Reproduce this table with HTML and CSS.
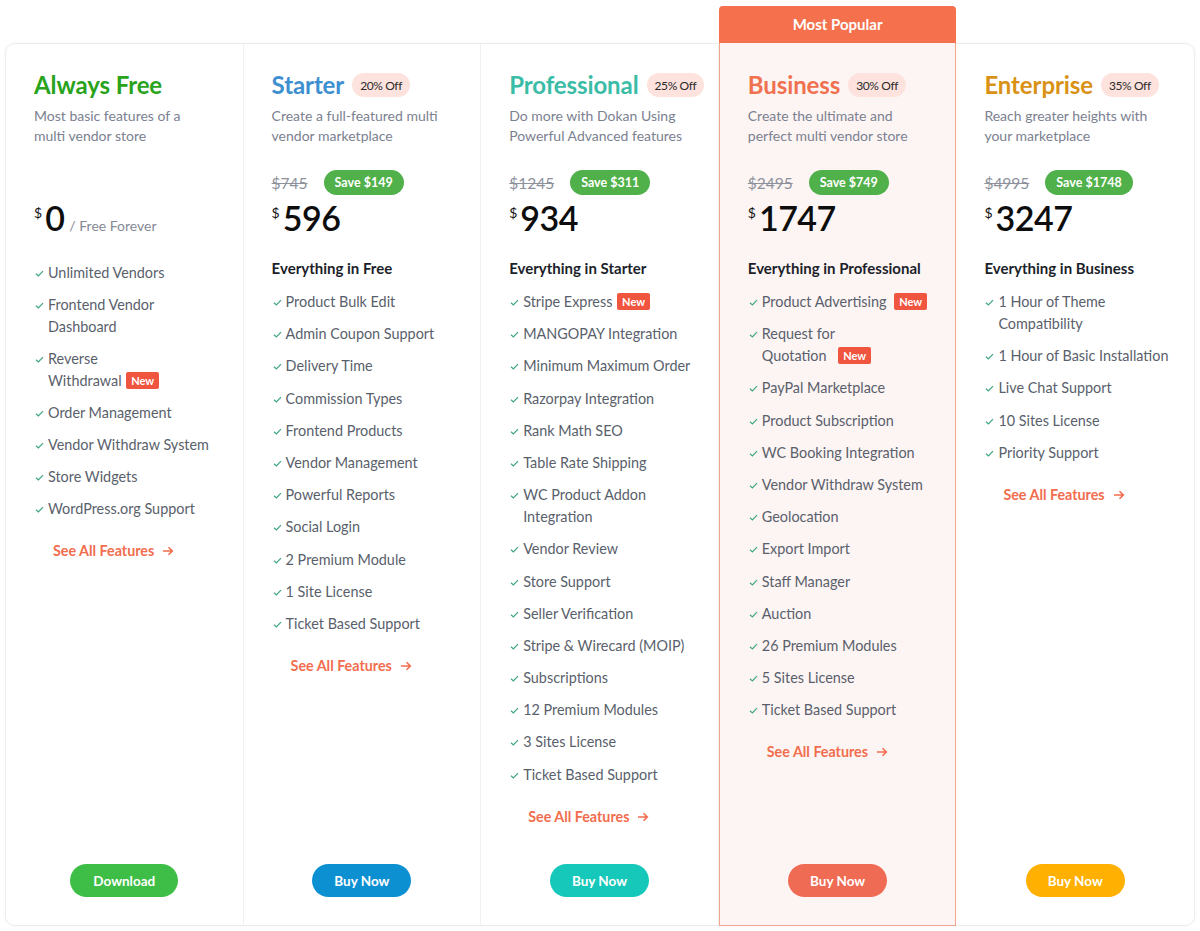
FILE: index.html
```html
<!DOCTYPE html>
<html lang="en">
<head>
<meta charset="utf-8">
<title>Pricing</title>
<link rel="stylesheet" href="styles.css">
</head>
<body>
<main class="pricing">
  <div class="plans">

    <section class="plan">
      <div class="plan-body">
        <div class="plan-head"><h2 class="plan-title title-free">Always Free</h2></div>
        <p class="plan-desc">Most basic features of a<br>multi vendor store</p>
        <div class="old-row old-row--empty"></div>
        <div class="price"><span class="cur">$</span><span class="amount">0</span><span class="period">/ Free Forever</span></div>
        <ul class="features features--first">
          <li><span class="chk"><svg viewBox="0 0 10 8" width="9" height="7"><path d="M1 4.3 3.7 6.8 9 1.2" fill="none" stroke="#3fa585" stroke-width="1.4"/></svg></span><span>Unlimited Vendors</span></li>
          <li><span class="chk"><svg viewBox="0 0 10 8" width="9" height="7"><path d="M1 4.3 3.7 6.8 9 1.2" fill="none" stroke="#3fa585" stroke-width="1.4"/></svg></span><span>Frontend Vendor<br>Dashboard</span></li>
          <li><span class="chk"><svg viewBox="0 0 10 8" width="9" height="7"><path d="M1 4.3 3.7 6.8 9 1.2" fill="none" stroke="#3fa585" stroke-width="1.4"/></svg></span><span>Reverse<br>Withdrawal <em class="new">New</em></span></li>
          <li><span class="chk"><svg viewBox="0 0 10 8" width="9" height="7"><path d="M1 4.3 3.7 6.8 9 1.2" fill="none" stroke="#3fa585" stroke-width="1.4"/></svg></span><span>Order Management</span></li>
          <li><span class="chk"><svg viewBox="0 0 10 8" width="9" height="7"><path d="M1 4.3 3.7 6.8 9 1.2" fill="none" stroke="#3fa585" stroke-width="1.4"/></svg></span><span>Vendor Withdraw System</span></li>
          <li><span class="chk"><svg viewBox="0 0 10 8" width="9" height="7"><path d="M1 4.3 3.7 6.8 9 1.2" fill="none" stroke="#3fa585" stroke-width="1.4"/></svg></span><span>Store Widgets</span></li>
          <li><span class="chk"><svg viewBox="0 0 10 8" width="9" height="7"><path d="M1 4.3 3.7 6.8 9 1.2" fill="none" stroke="#3fa585" stroke-width="1.4"/></svg></span><span>WordPress.org Support</span></li>
        </ul>
        <a class="see-all" href="#">See All Features <svg viewBox="0 0 12 10" width="12" height="10"><path d="M1 5h9.5M6.5 1.3 10.3 5 6.5 8.7" fill="none" stroke="currentColor" stroke-width="1.6"/></svg></a>
        <div class="cta"><a class="btn btn-green" href="#">Download</a></div>
      </div>
    </section>

    <section class="plan">
      <div class="plan-body">
        <div class="plan-head"><h2 class="plan-title title-starter">Starter</h2><span class="off">20% Off</span></div>
        <p class="plan-desc">Create a full-featured multi<br>vendor marketplace</p>
        <div class="old-row"><s class="old">$745</s><span class="save">Save $149</span></div>
        <div class="price"><span class="cur">$</span><span class="amount">596</span></div>
        <h3 class="includes">Everything in Free</h3>
        <ul class="features">
          <li><span class="chk"><svg viewBox="0 0 10 8" width="9" height="7"><path d="M1 4.3 3.7 6.8 9 1.2" fill="none" stroke="#3fa585" stroke-width="1.4"/></svg></span><span>Product Bulk Edit</span></li>
          <li><span class="chk"><svg viewBox="0 0 10 8" width="9" height="7"><path d="M1 4.3 3.7 6.8 9 1.2" fill="none" stroke="#3fa585" stroke-width="1.4"/></svg></span><span>Admin Coupon Support</span></li>
          <li><span class="chk"><svg viewBox="0 0 10 8" width="9" height="7"><path d="M1 4.3 3.7 6.8 9 1.2" fill="none" stroke="#3fa585" stroke-width="1.4"/></svg></span><span>Delivery Time</span></li>
          <li><span class="chk"><svg viewBox="0 0 10 8" width="9" height="7"><path d="M1 4.3 3.7 6.8 9 1.2" fill="none" stroke="#3fa585" stroke-width="1.4"/></svg></span><span>Commission Types</span></li>
          <li><span class="chk"><svg viewBox="0 0 10 8" width="9" height="7"><path d="M1 4.3 3.7 6.8 9 1.2" fill="none" stroke="#3fa585" stroke-width="1.4"/></svg></span><span>Frontend Products</span></li>
          <li><span class="chk"><svg viewBox="0 0 10 8" width="9" height="7"><path d="M1 4.3 3.7 6.8 9 1.2" fill="none" stroke="#3fa585" stroke-width="1.4"/></svg></span><span>Vendor Management</span></li>
          <li><span class="chk"><svg viewBox="0 0 10 8" width="9" height="7"><path d="M1 4.3 3.7 6.8 9 1.2" fill="none" stroke="#3fa585" stroke-width="1.4"/></svg></span><span>Powerful Reports</span></li>
          <li><span class="chk"><svg viewBox="0 0 10 8" width="9" height="7"><path d="M1 4.3 3.7 6.8 9 1.2" fill="none" stroke="#3fa585" stroke-width="1.4"/></svg></span><span>Social Login</span></li>
          <li><span class="chk"><svg viewBox="0 0 10 8" width="9" height="7"><path d="M1 4.3 3.7 6.8 9 1.2" fill="none" stroke="#3fa585" stroke-width="1.4"/></svg></span><span>2 Premium Module</span></li>
          <li><span class="chk"><svg viewBox="0 0 10 8" width="9" height="7"><path d="M1 4.3 3.7 6.8 9 1.2" fill="none" stroke="#3fa585" stroke-width="1.4"/></svg></span><span>1 Site License</span></li>
          <li><span class="chk"><svg viewBox="0 0 10 8" width="9" height="7"><path d="M1 4.3 3.7 6.8 9 1.2" fill="none" stroke="#3fa585" stroke-width="1.4"/></svg></span><span>Ticket Based Support</span></li>
        </ul>
        <a class="see-all" href="#">See All Features <svg viewBox="0 0 12 10" width="12" height="10"><path d="M1 5h9.5M6.5 1.3 10.3 5 6.5 8.7" fill="none" stroke="currentColor" stroke-width="1.6"/></svg></a>
        <div class="cta"><a class="btn btn-blue" href="#">Buy Now</a></div>
      </div>
    </section>

    <section class="plan">
      <div class="plan-body">
        <div class="plan-head"><h2 class="plan-title title-pro">Professional</h2><span class="off">25% Off</span></div>
        <p class="plan-desc">Do more with Dokan Using<br>Powerful Advanced features</p>
        <div class="old-row"><s class="old">$1245</s><span class="save">Save $311</span></div>
        <div class="price"><span class="cur">$</span><span class="amount">934</span></div>
        <h3 class="includes">Everything in Starter</h3>
        <ul class="features">
          <li><span class="chk"><svg viewBox="0 0 10 8" width="9" height="7"><path d="M1 4.3 3.7 6.8 9 1.2" fill="none" stroke="#3fa585" stroke-width="1.4"/></svg></span><span>Stripe Express <em class="new">New</em></span></li>
          <li><span class="chk"><svg viewBox="0 0 10 8" width="9" height="7"><path d="M1 4.3 3.7 6.8 9 1.2" fill="none" stroke="#3fa585" stroke-width="1.4"/></svg></span><span>MANGOPAY Integration</span></li>
          <li><span class="chk"><svg viewBox="0 0 10 8" width="9" height="7"><path d="M1 4.3 3.7 6.8 9 1.2" fill="none" stroke="#3fa585" stroke-width="1.4"/></svg></span><span>Minimum Maximum Order</span></li>
          <li><span class="chk"><svg viewBox="0 0 10 8" width="9" height="7"><path d="M1 4.3 3.7 6.8 9 1.2" fill="none" stroke="#3fa585" stroke-width="1.4"/></svg></span><span>Razorpay Integration</span></li>
          <li><span class="chk"><svg viewBox="0 0 10 8" width="9" height="7"><path d="M1 4.3 3.7 6.8 9 1.2" fill="none" stroke="#3fa585" stroke-width="1.4"/></svg></span><span>Rank Math SEO</span></li>
          <li><span class="chk"><svg viewBox="0 0 10 8" width="9" height="7"><path d="M1 4.3 3.7 6.8 9 1.2" fill="none" stroke="#3fa585" stroke-width="1.4"/></svg></span><span>Table Rate Shipping</span></li>
          <li><span class="chk"><svg viewBox="0 0 10 8" width="9" height="7"><path d="M1 4.3 3.7 6.8 9 1.2" fill="none" stroke="#3fa585" stroke-width="1.4"/></svg></span><span>WC Product Addon<br>Integration</span></li>
          <li><span class="chk"><svg viewBox="0 0 10 8" width="9" height="7"><path d="M1 4.3 3.7 6.8 9 1.2" fill="none" stroke="#3fa585" stroke-width="1.4"/></svg></span><span>Vendor Review</span></li>
          <li><span class="chk"><svg viewBox="0 0 10 8" width="9" height="7"><path d="M1 4.3 3.7 6.8 9 1.2" fill="none" stroke="#3fa585" stroke-width="1.4"/></svg></span><span>Store Support</span></li>
          <li><span class="chk"><svg viewBox="0 0 10 8" width="9" height="7"><path d="M1 4.3 3.7 6.8 9 1.2" fill="none" stroke="#3fa585" stroke-width="1.4"/></svg></span><span>Seller Verification</span></li>
          <li><span class="chk"><svg viewBox="0 0 10 8" width="9" height="7"><path d="M1 4.3 3.7 6.8 9 1.2" fill="none" stroke="#3fa585" stroke-width="1.4"/></svg></span><span>Stripe &amp; Wirecard (MOIP)</span></li>
          <li><span class="chk"><svg viewBox="0 0 10 8" width="9" height="7"><path d="M1 4.3 3.7 6.8 9 1.2" fill="none" stroke="#3fa585" stroke-width="1.4"/></svg></span><span>Subscriptions</span></li>
          <li><span class="chk"><svg viewBox="0 0 10 8" width="9" height="7"><path d="M1 4.3 3.7 6.8 9 1.2" fill="none" stroke="#3fa585" stroke-width="1.4"/></svg></span><span>12 Premium Modules</span></li>
          <li><span class="chk"><svg viewBox="0 0 10 8" width="9" height="7"><path d="M1 4.3 3.7 6.8 9 1.2" fill="none" stroke="#3fa585" stroke-width="1.4"/></svg></span><span>3 Sites License</span></li>
          <li><span class="chk"><svg viewBox="0 0 10 8" width="9" height="7"><path d="M1 4.3 3.7 6.8 9 1.2" fill="none" stroke="#3fa585" stroke-width="1.4"/></svg></span><span>Ticket Based Support</span></li>
        </ul>
        <a class="see-all" href="#">See All Features <svg viewBox="0 0 12 10" width="12" height="10"><path d="M1 5h9.5M6.5 1.3 10.3 5 6.5 8.7" fill="none" stroke="currentColor" stroke-width="1.6"/></svg></a>
        <div class="cta"><a class="btn btn-teal" href="#">Buy Now</a></div>
      </div>
    </section>

    <section class="plan plan--popular">
      <div class="popular-tag">Most Popular</div>
      <div class="plan-body">
        <div class="plan-head"><h2 class="plan-title title-business">Business</h2><span class="off">30% Off</span></div>
        <p class="plan-desc">Create the ultimate and<br>perfect multi vendor store</p>
        <div class="old-row"><s class="old">$2495</s><span class="save">Save $749</span></div>
        <div class="price"><span class="cur">$</span><span class="amount">1747</span></div>
        <h3 class="includes">Everything in Professional</h3>
        <ul class="features">
          <li><span class="chk"><svg viewBox="0 0 10 8" width="9" height="7"><path d="M1 4.3 3.7 6.8 9 1.2" fill="none" stroke="#3fa585" stroke-width="1.4"/></svg></span><span>Product Advertising <em class="new new--wide">New</em></span></li>
          <li><span class="chk"><svg viewBox="0 0 10 8" width="9" height="7"><path d="M1 4.3 3.7 6.8 9 1.2" fill="none" stroke="#3fa585" stroke-width="1.4"/></svg></span><span>Request for<br>Quotation <em class="new new--wider">New</em></span></li>
          <li><span class="chk"><svg viewBox="0 0 10 8" width="9" height="7"><path d="M1 4.3 3.7 6.8 9 1.2" fill="none" stroke="#3fa585" stroke-width="1.4"/></svg></span><span>PayPal Marketplace</span></li>
          <li><span class="chk"><svg viewBox="0 0 10 8" width="9" height="7"><path d="M1 4.3 3.7 6.8 9 1.2" fill="none" stroke="#3fa585" stroke-width="1.4"/></svg></span><span>Product Subscription</span></li>
          <li><span class="chk"><svg viewBox="0 0 10 8" width="9" height="7"><path d="M1 4.3 3.7 6.8 9 1.2" fill="none" stroke="#3fa585" stroke-width="1.4"/></svg></span><span>WC Booking Integration</span></li>
          <li><span class="chk"><svg viewBox="0 0 10 8" width="9" height="7"><path d="M1 4.3 3.7 6.8 9 1.2" fill="none" stroke="#3fa585" stroke-width="1.4"/></svg></span><span>Vendor Withdraw System</span></li>
          <li><span class="chk"><svg viewBox="0 0 10 8" width="9" height="7"><path d="M1 4.3 3.7 6.8 9 1.2" fill="none" stroke="#3fa585" stroke-width="1.4"/></svg></span><span>Geolocation</span></li>
          <li><span class="chk"><svg viewBox="0 0 10 8" width="9" height="7"><path d="M1 4.3 3.7 6.8 9 1.2" fill="none" stroke="#3fa585" stroke-width="1.4"/></svg></span><span>Export Import</span></li>
          <li><span class="chk"><svg viewBox="0 0 10 8" width="9" height="7"><path d="M1 4.3 3.7 6.8 9 1.2" fill="none" stroke="#3fa585" stroke-width="1.4"/></svg></span><span>Staff Manager</span></li>
          <li><span class="chk"><svg viewBox="0 0 10 8" width="9" height="7"><path d="M1 4.3 3.7 6.8 9 1.2" fill="none" stroke="#3fa585" stroke-width="1.4"/></svg></span><span>Auction</span></li>
          <li><span class="chk"><svg viewBox="0 0 10 8" width="9" height="7"><path d="M1 4.3 3.7 6.8 9 1.2" fill="none" stroke="#3fa585" stroke-width="1.4"/></svg></span><span>26 Premium Modules</span></li>
          <li><span class="chk"><svg viewBox="0 0 10 8" width="9" height="7"><path d="M1 4.3 3.7 6.8 9 1.2" fill="none" stroke="#3fa585" stroke-width="1.4"/></svg></span><span>5 Sites License</span></li>
          <li><span class="chk"><svg viewBox="0 0 10 8" width="9" height="7"><path d="M1 4.3 3.7 6.8 9 1.2" fill="none" stroke="#3fa585" stroke-width="1.4"/></svg></span><span>Ticket Based Support</span></li>
        </ul>
        <a class="see-all" href="#">See All Features <svg viewBox="0 0 12 10" width="12" height="10"><path d="M1 5h9.5M6.5 1.3 10.3 5 6.5 8.7" fill="none" stroke="currentColor" stroke-width="1.6"/></svg></a>
        <div class="cta"><a class="btn btn-orange" href="#">Buy Now</a></div>
      </div>
    </section>

    <section class="plan">
      <div class="plan-body">
        <div class="plan-head"><h2 class="plan-title title-enterprise">Enterprise</h2><span class="off">35% Off</span></div>
        <p class="plan-desc">Reach greater heights with<br>your marketplace</p>
        <div class="old-row"><s class="old">$4995</s><span class="save">Save $1748</span></div>
        <div class="price"><span class="cur">$</span><span class="amount">3247</span></div>
        <h3 class="includes">Everything in Business</h3>
        <ul class="features">
          <li><span class="chk"><svg viewBox="0 0 10 8" width="9" height="7"><path d="M1 4.3 3.7 6.8 9 1.2" fill="none" stroke="#3fa585" stroke-width="1.4"/></svg></span><span>1 Hour of Theme<br>Compatibility</span></li>
          <li><span class="chk"><svg viewBox="0 0 10 8" width="9" height="7"><path d="M1 4.3 3.7 6.8 9 1.2" fill="none" stroke="#3fa585" stroke-width="1.4"/></svg></span><span>1 Hour of Basic Installation</span></li>
          <li><span class="chk"><svg viewBox="0 0 10 8" width="9" height="7"><path d="M1 4.3 3.7 6.8 9 1.2" fill="none" stroke="#3fa585" stroke-width="1.4"/></svg></span><span>Live Chat Support</span></li>
          <li><span class="chk"><svg viewBox="0 0 10 8" width="9" height="7"><path d="M1 4.3 3.7 6.8 9 1.2" fill="none" stroke="#3fa585" stroke-width="1.4"/></svg></span><span>10 Sites License</span></li>
          <li><span class="chk"><svg viewBox="0 0 10 8" width="9" height="7"><path d="M1 4.3 3.7 6.8 9 1.2" fill="none" stroke="#3fa585" stroke-width="1.4"/></svg></span><span>Priority Support</span></li>
        </ul>
        <a class="see-all" href="#">See All Features <svg viewBox="0 0 12 10" width="12" height="10"><path d="M1 5h9.5M6.5 1.3 10.3 5 6.5 8.7" fill="none" stroke="currentColor" stroke-width="1.6"/></svg></a>
        <div class="cta"><a class="btn btn-yellow" href="#">Buy Now</a></div>
      </div>
    </section>

  </div>
</main>
</body>
</html>
```

FILE: styles.css
```css
* { box-sizing: border-box; }

html, body {
  margin: 0;
  padding: 0;
  background: #ffffff;
}

body {
  font-family: Lato, "Liberation Sans", Arial, sans-serif;
  color: #1f2330;
  -webkit-font-smoothing: antialiased;
}

.pricing {
  padding: 43px 5px 5px;
}

.plans {
  display: grid;
  grid-template-columns: repeat(5, minmax(0, 1fr));
  grid-template-rows: 881px;
  height: 883px;
  border: 1px solid #ebebeb;
  border-radius: 10px;
  box-shadow: 0 0 6px rgba(0, 0, 0, 0.03);
}

.plan {
  display: flex;
  flex-direction: column;
  border-right: 1px solid #f0f0f0;
  min-width: 0;
}

.plan:last-child { border-right: 0; }

.plan-body {
  flex: 1;
  display: flex;
  flex-direction: column;
  padding: 26px 20px 28px 28px;
}

/* Most popular column */
.plan--popular {
  margin-top: -38px;
  margin-bottom: -1px;
  border-right: 0;
}

.popular-tag {
  height: 37px;
  background: #f5714d;
  color: #ffffff;
  font-weight: 700;
  font-size: 15px;
  line-height: 37px;
  text-align: center;
  border-radius: 4px 4px 0 0;
}

.plan--popular .plan-body {
  background: #fdf5f4;
  border: 1px solid #f3a58f;
  border-top: 0;
  padding-top: 27px;
  padding-left: 28px;
}

/* header */
.plan-head {
  display: flex;
  align-items: center;
  gap: 8px;
  height: 30px;
  white-space: nowrap;
}

.plan-title {
  margin: 0;
  font-size: 24px;
  line-height: 30px;
  font-weight: 700;
  letter-spacing: -0.1px;
}

.title-free { color: #2aa31c; }
.title-starter { color: #3d8fcf; }
.title-pro { color: #3bbca6; }
.title-business { color: #f0714f; }
.title-enterprise { color: #d99215; }

.off {
  display: inline-flex;
  align-items: center;
  height: 24px;
  padding: 0 8px;
  border-radius: 12px;
  background: #fde2dd;
  color: #2a2a2a;
  font-size: 12px;
  letter-spacing: -0.4px;
  white-space: nowrap;
}

.plan-desc {
  margin: 6px 0 0;
  font-size: 14px;
  line-height: 19.5px;
  color: #7b8190;
  white-space: nowrap;
}

/* prices */
.old-row {
  display: flex;
  align-items: center;
  height: 25px;
  margin-top: 25px;
  gap: 16px;
  white-space: nowrap;
}

.old {
  font-size: 15.5px;
  color: #8d919b;
  text-decoration: line-through;
}

.save {
  display: inline-flex;
  align-items: center;
  height: 25px;
  padding: 0 11px;
  border-radius: 13px;
  background: #50b04a;
  color: #ffffff;
  font-size: 12.5px;
  font-weight: 700;
}

.price {
  display: flex;
  align-items: baseline;
  height: 40px;
  margin-top: 3px;
  white-space: nowrap;
}

.cur {
  align-self: flex-start;
  font-size: 14px;
  line-height: 14px;
  margin-top: 8px;
  margin-right: 3px;
  color: #111;
}

.amount {
  font-size: 34px;
  line-height: 40px;
  font-weight: 600;
  color: #0d0d0d;
  letter-spacing: -0.5px;
}

.period {
  margin-left: 5px;
  font-size: 14px;
  color: #858a96;
}

.includes {
  margin: 19px 0 0;
  font-size: 15px;
  line-height: 22px;
  font-weight: 700;
  color: #1c1f2a;
  white-space: nowrap;
}

/* features */
.features {
  list-style: none;
  margin: 12px 0 0;
  padding: 0;
  display: flex;
  flex-direction: column;
  gap: 10.2px;
}

.features--first { margin-top: 24px; gap: 10px; }

.features li {
  display: flex;
  font-size: 14.4px;
  line-height: 22px;
  color: #5a5f6c;
  white-space: nowrap;
}

.chk {
  flex: 0 0 14px;
  padding-top: 8px;
  padding-left: 1px;
  display: flex;
  align-items: flex-start;
}

.chk svg { display: block; }

.new {
  display: inline-block;
  font-style: normal;
  font-size: 11px;
  font-weight: 700;
  line-height: 17px;
  height: 17px;
  padding: 0 5px;
  margin-left: 1px;
  border-radius: 2px;
  background: #f0553f;
  color: #ffffff;
  vertical-align: 1px;
}

.new--wide { margin-left: 4px; }
.new--wider { margin-left: 8px; }

.see-all {
  display: inline-flex;
  align-items: center;
  gap: 8px;
  align-self: flex-start;
  margin: 20px 0 0 19px;
  font-size: 14.3px;
  line-height: 22px;
  font-weight: 700;
  color: #f26d4e;
  text-decoration: none;
  white-space: nowrap;
}

.cta {
  margin-top: auto;
  display: flex;
  justify-content: center;
  padding-right: 8px;
}

.plan--popular .cta { padding-right: 8px; }

.btn {
  display: inline-flex;
  align-items: center;
  justify-content: center;
  height: 33px;
  padding: 0 22px;
  border-radius: 17px;
  color: #ffffff;
  font-size: 13.5px;
  font-weight: 700;
  text-decoration: none;
  white-space: nowrap;
}

.btn-green { background: #3ebe47; padding: 0 23px; }
.btn-blue { background: #0d90d2; }
.btn-teal { background: #16c8b9; }
.btn-orange { background: #f06b54; }
.btn-yellow { background: #ffb000; }
```
